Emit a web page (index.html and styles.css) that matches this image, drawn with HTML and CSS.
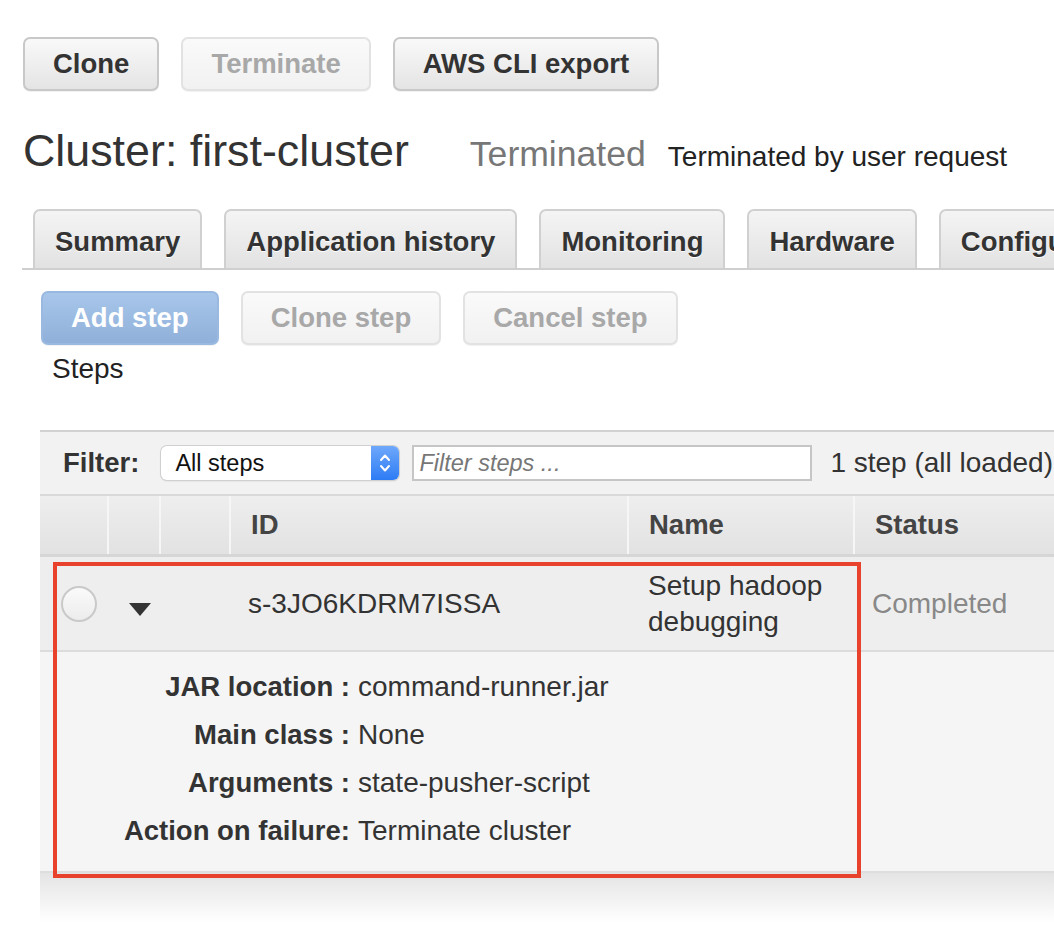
FILE: index.html
```html
<!DOCTYPE html>
<html>
    <head>
        <title>Cluster: first-cluster</title>
        <meta charset="UTF-8">
        <link rel="stylesheet" href="styles.css">
    </head>
    <body>
        <div class="page">
            <div class="actions">
                <button class="btn">Clone</button>
                <button class="btn disabled">Terminate</button>
                <button class="btn">AWS CLI export</button>
            </div>

            <div class="title-row">
                <h1 class="title">Cluster: first-cluster</h1>
                <span class="state">Terminated</span>
                <span class="state-reason">Terminated by user request</span>
            </div>

            <div class="tabs">
                <div class="tab">Summary</div>
                <div class="tab">Application history</div>
                <div class="tab">Monitoring</div>
                <div class="tab">Hardware</div>
                <div class="tab">Configu</div>
            </div>

            <div class="step-actions">
                <button class="btn primary">Add step</button>
                <button class="btn disabled">Clone step</button>
                <button class="btn disabled">Cancel step</button>
            </div>
            <div class="section-label">Steps</div>

            <div class="panel">
                <div class="filter-bar">
                    <span class="filter-label">Filter:</span>
                    <div class="select">
                        <span class="select-value">All steps</span>
                        <span class="select-arrows">
                            <svg width="14" height="24" viewBox="0 0 14 24">
                                <path d="M3 9 L7 4.5 L11 9" fill="none" stroke="#fff" stroke-width="2" stroke-linecap="round" stroke-linejoin="round"/>
                                <path d="M3 15 L7 19.5 L11 15" fill="none" stroke="#fff" stroke-width="2" stroke-linecap="round" stroke-linejoin="round"/>
                            </svg>
                        </span>
                    </div>
                    <div class="search">Filter steps ...</div>
                    <span class="count">1 step (all loaded)</span>
                </div>

                <table class="steps">
                    <colgroup>
                        <col class="c-radio">
                        <col class="c-toggle">
                        <col class="c-blank">
                        <col class="c-id">
                        <col class="c-name">
                        <col class="c-status">
                    </colgroup>
                    <thead>
                        <tr>
                            <th></th>
                            <th></th>
                            <th></th>
                            <th>ID</th>
                            <th>Name</th>
                            <th>Status</th>
                        </tr>
                    </thead>
                    <tbody>
                        <tr class="step-row">
                            <td><span class="radio"></span></td>
                            <td class="toggle">
                                <svg width="22" height="13" viewBox="0 0 22 13">
                                    <polygon points="0,0 22,0 11,13" fill="#333"/>
                                </svg>
                            </td>
                            <td></td>
                            <td class="step-id">s-3JO6KDRM7ISSA</td>
                            <td class="step-name">Setup hadoop debugging</td>
                            <td class="step-status">Completed</td>
                        </tr>
                        <tr class="detail-row">
                            <td colspan="6">
                                <dl class="details">
                                    <dt>JAR location :</dt>
                                    <dd>command-runner.jar</dd>
                                    <dt>Main class :</dt>
                                    <dd>None</dd>
                                    <dt>Arguments :</dt>
                                    <dd>state-pusher-script</dd>
                                    <dt>Action on failure:</dt>
                                    <dd>Terminate cluster</dd>
                                </dl>
                            </td>
                        </tr>
                    </tbody>
                </table>

                <div class="highlight"></div>
            </div>
            <div class="panel-fade"></div>
        </div>
    </body>
</html>
```

FILE: styles.css
```css
html{
    overflow: hidden;
}

body{
    margin: 0;
    background: #fff;
    font-family: "Liberation Sans", Arial, Helvetica, sans-serif;
    font-size: 28px;
    color: #333;
}

.page{
    width: 1054px;
    height: 926px;
    box-sizing: border-box;
    padding-top: 37px;
    overflow: hidden;
}

/* buttons */

.btn{
    font-family: inherit;
    font-size: 27.5px;
    font-weight: bold;
    color: #333;
    height: 54px;
    padding: 0 28px;
    border: 2px solid #c8c8c8;
    border-radius: 7px;
    background: linear-gradient(#f9f9f9, #e4e4e4);
    box-shadow: 0 1px 0 rgba(0,0,0,0.05);
}

.btn.disabled{
    color: #a8a8a8;
    border-color: #e2e2e2;
    background: linear-gradient(#fafafa, #f1f1f1);
}

.btn.primary{
    color: #fff;
    border-color: #9ab9e0;
    background: linear-gradient(#a8c6ea, #8fb0da);
}

.actions{
    display: flex;
    gap: 22px;
    margin-left: 23px;
}

/* heading */

.title-row{
    display: flex;
    align-items: baseline;
    margin: 37px 0 0 23px;
    line-height: 44px;
}

.title{
    margin: 0;
    font-size: 44.8px;
    font-weight: normal;
    color: #333;
}

.state{
    margin-left: 61px;
    font-size: 35.6px;
    color: #777;
}

.state-reason{
    margin-left: 22px;
    color: #222;
}

/* tabs */

.tabs{
    display: flex;
    gap: 22px;
    margin: 30px 0 0 22px;
    padding-left: 11px;
    border-bottom: 2px solid #cfcfcf;
    white-space: nowrap;
    overflow: hidden;
}

.tab{
    flex: none;
    height: 57px;
    line-height: 61px;
    padding: 0 20px;
    font-size: 27.5px;
    font-weight: bold;
    color: #333;
    border: 2px solid #d0d0d0;
    border-bottom: none;
    border-radius: 7px 7px 0 0;
    background: linear-gradient(#f4f4f4, #e2e2e2);
    text-shadow: 0 1px 0 #fff;
}

.tab:last-child{
    margin-right: -40px;
}

/* step actions */

.step-actions{
    display: flex;
    gap: 22px;
    margin: 21px 0 0 41px;
}

.section-label{
    margin: 8px 0 0 52px;
    line-height: 32px;
    color: #222;
}

/* steps panel */

.panel{
    position: relative;
    width: 1100px;
    margin: 45px 0 0 40px;
    border-top: 2px solid #d2d2d2;
}

/* soft fade under the table */
.panel-fade{
    width: 1100px;
    height: 50px;
    margin-left: 40px;
    background: linear-gradient(#e4e4e4, rgba(255,255,255,0));
}

.filter-bar{
    display: flex;
    align-items: center;
    height: 62px;
    padding-left: 23px;
    background: #f2f2f2;
    border-bottom: 2px solid #d9d9d9;
    white-space: nowrap;
}

.filter-label{
    font-size: 27.5px;
    font-weight: bold;
    color: #333;
}

.select{
    display: flex;
    width: 238px;
    height: 34px;
    margin-left: 22px;
    border-radius: 6px;
    background: #fff;
    box-shadow: 0 0 0 1px #d0d0d0, 0 1px 2px rgba(0,0,0,0.15);
    overflow: hidden;
}

.select-value{
    flex: 1;
    padding-left: 14px;
    font-size: 23.5px;
    line-height: 34px;
    color: #111;
}

.select-arrows{
    display: flex;
    align-items: center;
    justify-content: center;
    width: 28px;
    background: linear-gradient(#6ea8fb, #2d7cf5);
}

.search{
    width: 391px;
    height: 32px;
    margin-left: 13px;
    padding-left: 5px;
    border: 2px solid #c6c6c6;
    background: #fff;
    font-size: 23.5px;
    font-style: italic;
    line-height: 32px;
    color: #777;
}

.count{
    margin-left: 18px;
    color: #333;
}

.steps{
    width: 1100px;
    table-layout: fixed;
    border-collapse: collapse;
}

.c-radio{ width: 68px; }
.c-toggle{ width: 52px; }
.c-blank{ width: 70px; }
.c-id{ width: 398px; }
.c-name{ width: 226px; }

.steps th{
    height: 58px;
    padding: 0 0 0 20px;
    text-align: left;
    font-size: 27.5px;
    font-weight: bold;
    color: #444;
    background: linear-gradient(#eeeeee, #e2e2e2);
    border-left: 2px solid #f6f6f6;
    border-bottom: 3px solid #d6d6d6;
}

.steps th:first-child{
    border-left: none;
}

.step-row td{
    height: 87px;
    padding: 0 0 0 18px;
    background: #eeeeee;
    border-bottom: 2px solid #dcdcdc;
    vertical-align: middle;
    line-height: 36px;
}

.step-row td:first-child{
    padding-left: 21px;
}

.radio{
    display: block;
    width: 32px;
    height: 32px;
    border: 2px solid #c9c9c9;
    border-radius: 50%;
    background: linear-gradient(#fafafa, #ececec);
}

.step-row td.toggle{
    padding-left: 21px;
    padding-top: 6px;
}

.step-id{
    color: #333;
}

.step-row td.step-name{
    padding-left: 20px;
    color: #333;
}

.step-status{
    color: #888;
}

.detail-row td{
    height: 219px;
    padding: 0;
    background: #f5f5f5;
    border-bottom: 2px solid #dedede;
    vertical-align: top;
}

.details{
    display: grid;
    grid-template-columns: 310px auto;
    column-gap: 8px;
    row-gap: 16px;
    margin: 19px 0 0 0;
    line-height: 32px;
}

.details dt{
    text-align: right;
    font-size: 27.5px;
    font-weight: bold;
    color: #333;
}

.details dd{
    margin: 0;
    color: #333;
}

/* red outline drawn over the expanded step */
.highlight{
    position: absolute;
    z-index: 1;
    left: 13px;
    top: 130px;
    width: 800px;
    height: 308px;
    border: 4px solid #e8412c;
}
```
